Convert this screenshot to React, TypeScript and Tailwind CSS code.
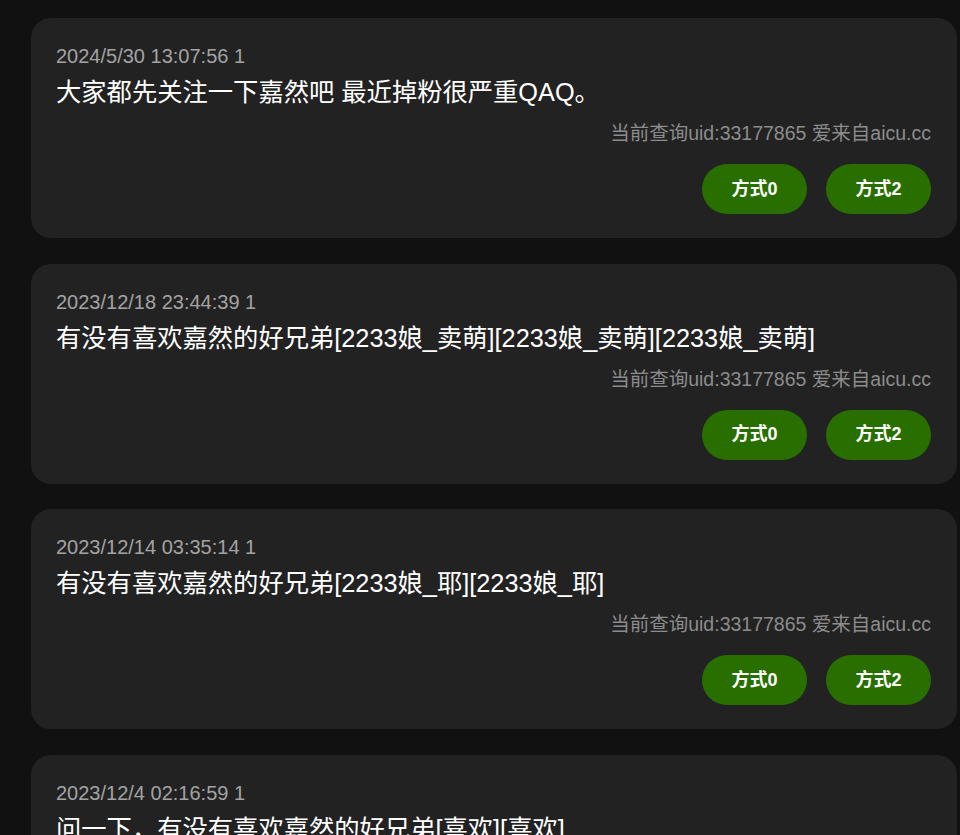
import React from 'react';

interface Reply {
  time: string;
  text: string;
}

const replies: Reply[] = [
  { time: '2024/5/30 13:07:56 1', text: '大家都先关注一下嘉然吧 最近掉粉很严重QAQ。' },
  { time: '2023/12/18 23:44:39 1', text: '有没有喜欢嘉然的好兄弟[2233娘_卖萌][2233娘_卖萌][2233娘_卖萌]' },
  { time: '2023/12/14 03:35:14 1', text: '有没有喜欢嘉然的好兄弟[2233娘_耶][2233娘_耶]' },
  { time: '2023/12/4 02:16:59 1', text: '问一下，有没有喜欢嘉然的好兄弟[喜欢][喜欢]' },
  { time: '2023/11/28 19:02:11 1', text: '有没有喜欢嘉然的好兄弟' },
];

function ReplyCard({ time, text }: Reply) {
  return (
    <div className="w-[926px] h-[220px] shrink-0 rounded-[20px] bg-[#222222] pr-[26px] pl-[25px] pt-[26px]">
      {/* time + count */}
      <div className="text-[20px] leading-[24px] text-[#a3a3a3]">{time}</div>

      {/* content */}
      <div className="mt-1 text-[25.3px] leading-[40px] text-white whitespace-nowrap">{text}</div>

      {/* source line */}
      <div className="mt-2 text-right text-[19.5px] leading-[26px] text-[#8c8c8c]">
        当前查询uid:33177865 爱来自aicu.cc
      </div>

      {/* actions */}
      <div className="mt-[18px] flex justify-end gap-[19px]">
        <button className="w-[105px] h-[50px] rounded-full bg-[#286f00] text-white text-[18px] font-bold">
          方式0
        </button>
        <button className="w-[105px] h-[50px] rounded-full bg-[#286f00] text-white text-[18px] font-bold">
          方式2
        </button>
      </div>
    </div>
  );
}

export default function App() {
  return (
    <div
      className="h-[835px] overflow-hidden bg-[#111111] pl-[31px] pt-[18px] flex flex-col gap-[25.5px]"
      style={{ fontFamily: '"Liberation Sans", "Noto Sans CJK SC", sans-serif' }}
    >
      {replies.map((r, i) => (
        <ReplyCard key={i} {...r} />
      ))}
    </div>
  );
}
